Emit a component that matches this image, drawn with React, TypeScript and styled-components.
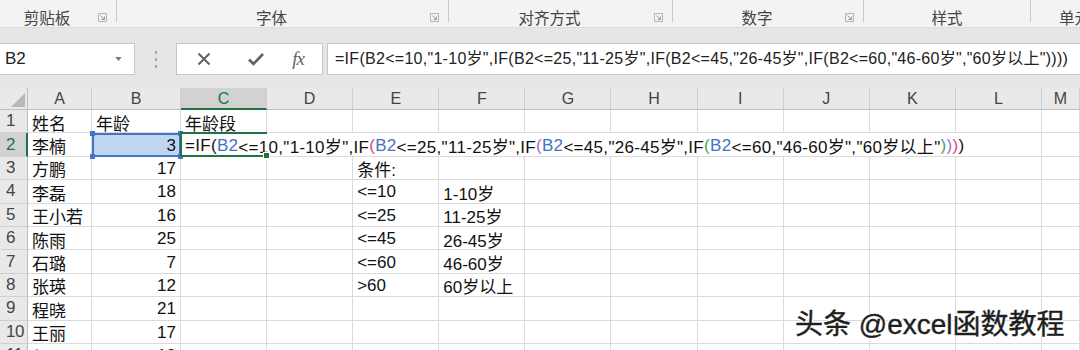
import React from 'react';
import styled, { createGlobalStyle } from 'styled-components';

const GlobalStyle = createGlobalStyle`
  html, body {
    margin: 0;
    padding: 0;
    background: #fff;
  }
  body {
    font-family: "Liberation Sans", "Noto Sans CJK SC", sans-serif;
  }
`;

const GREEN = '#217346';
const REF_BLUE = '#4472c4';

const groups = [
  { label: '剪贴板', width: 117, launcher: true, pad: 0 },
  { label: '字体', width: 332, launcher: true, pad: 0 },
  { label: '对齐方式', width: 224, launcher: true, pad: 0 },
  { label: '数字', width: 191, launcher: true, pad: 0 },
  { label: '样式', width: 167, launcher: false, pad: 0 },
  { label: '单元格', width: 100, launcher: false, pad: 28 },
];

const columns = ['A', 'B', 'C', 'D', 'E', 'F', 'G', 'H', 'I', 'J', 'K', 'L', 'M'];

type Seg = { t: string; c?: string };

const PINK = '#e2457c';
const PURPLE = '#a06ad6';
const LIME = '#41a85f';

const formula: Seg[] = [
  { t: '=IF(' },
  { t: 'B2', c: REF_BLUE },
  { t: '<=10,"1-10岁",IF' },
  { t: '(', c: PINK },
  { t: 'B2', c: REF_BLUE },
  { t: '<=25,"11-25岁",IF' },
  { t: '(', c: PURPLE },
  { t: 'B2', c: REF_BLUE },
  { t: '<=45,"26-45岁",IF' },
  { t: '(', c: LIME },
  { t: 'B2', c: REF_BLUE },
  { t: '<=60,"46-60岁","60岁以上"' },
  { t: ')', c: LIME },
  { t: ')', c: PURPLE },
  { t: ')', c: PINK },
  { t: ')' },
];

const formulaPlain = formula.map((s) => s.t).join('');

// name, age, col E, col F
const rows: [string, string, string, string][] = [
  ['姓名', '年龄', '', ''],
  ['李楠', '3', '', ''],
  ['方鹏', '17', '条件:', ''],
  ['李磊', '18', '<=10', '1-10岁'],
  ['王小若', '16', '<=25', '11-25岁'],
  ['陈雨', '25', '<=45', '26-45岁'],
  ['石璐', '7', '<=60', '46-60岁'],
  ['张瑛', '12', '>60', '60岁以上'],
  ['程晓', '21', '', ''],
  ['王丽', '17', '', ''],
  ['赵丽丽', '19', '', ''],
];

const App = () => (
  <>
    <GlobalStyle />
    <Window>
      <Ribbon>
        {groups.map((g) => (
          <Group key={g.label} $w={g.width}>
            <GroupLabel $pad={g.pad}>{g.label}</GroupLabel>
            {g.launcher && (
              <Launcher viewBox="0 0 9 9">
                <path d="M0.5 0.5 H8.5 V8.5 H0.5 Z" fill="none" stroke="#b3b3b3" />
                <path d="M2.5 2.5 L6.5 6.5 M6.5 3.5 V6.5 H3.5" fill="none" stroke="#9a9a9a" />
              </Launcher>
            )}
          </Group>
        ))}
      </Ribbon>

      <FormulaArea>
        <NameBox>
          <span>B2</span>
          <DropArrow viewBox="0 0 8 5">
            <path d="M0 0 H8 L4 5 Z" fill="#7a7a7a" />
          </DropArrow>
        </NameBox>
        <Grip>
          <i />
          <i />
          <i />
        </Grip>
        <ButtonBox>
          <IconButton>
            <svg width="16" height="16" viewBox="0 0 16 16">
              <path d="M2.5 2.5 L13.5 13.5 M13.5 2.5 L2.5 13.5" stroke="#606060" strokeWidth="2" />
            </svg>
          </IconButton>
          <IconButton>
            <svg width="18" height="16" viewBox="0 0 18 16">
              <path d="M2 8.5 L6.5 13 L16 3" fill="none" stroke="#606060" strokeWidth="2.6" />
            </svg>
          </IconButton>
          <IconButton>
            <Fx>fx</Fx>
          </IconButton>
        </ButtonBox>
        <FormulaInput>{formulaPlain}</FormulaInput>
      </FormulaArea>

      <Sheet>
        <Corner>
          <svg width="14" height="14" viewBox="0 0 14 14">
            <path d="M14 0 V14 H0 Z" fill="#b8b8b8" />
          </svg>
        </Corner>
        {columns.map((c) => (
          <ColHeader key={c} $sel={c === 'C'}>
            {c}
          </ColHeader>
        ))}

        {rows.map((r, i) => {
          const n = i + 1;
          return (
            <React.Fragment key={n}>
              <RowHeader $sel={n === 2}>{n}</RowHeader>
              <Cell>{r[0]}</Cell>
              {n === 2 ? (
                <RefCell $num>
                  {r[1]}
                  <Handle $pos="tl" />
                  <Handle $pos="tr" />
                  <Handle $pos="bl" />
                  <Handle $pos="br" />
                </RefCell>
              ) : (
                <Cell $num={n !== 1}>{r[1]}</Cell>
              )}
              {n === 2 ? (
                <EditCell>
                  <EditText>
                    {formula.map((s, k) => (
                      <Seg key={k} $c={s.c}>
                        {s.t}
                      </Seg>
                    ))}
                  </EditText>
                </EditCell>
              ) : (
                <Cell>{n === 1 ? '年龄段' : ''}</Cell>
              )}
              <Cell />
              <Cell>{r[2]}</Cell>
              <Cell>{r[3]}</Cell>
              <Cell />
              <Cell />
              <Cell />
              <Cell />
              <Cell />
              <Cell />
              <Cell />
            </React.Fragment>
          );
        })}
      </Sheet>

      <Watermark>头条 @excel函数教程</Watermark>
    </Window>
  </>
);

const Window = styled.div`
  position: relative;
  width: 1080px;
  height: 350px;
  overflow: hidden;
  background: #e6e6e6;
`;

const Ribbon = styled.div`
  display: flex;
  height: 28px;
  background: #f3f3f3;
  border-bottom: 1px solid #dcdcdc;
  box-sizing: border-box;
  overflow: hidden;
`;

const Group = styled.div<{ $w: number }>`
  flex: 0 0 ${(p) => p.$w}px;
  height: 22px;
  display: flex;
  align-items: flex-end;
  box-sizing: border-box;
  border-right: 1px solid #c8c8c8;
`;

const GroupLabel = styled.div<{ $pad: number }>`
  flex: 1;
  text-align: ${(p) => (p.$pad ? 'left' : 'center')};
  padding-left: ${(p) => p.$pad}px;
  font-family: "Noto Sans CJK SC", sans-serif;
  font-size: 15.5px;
  line-height: 20px;
  color: #444;
  margin-bottom: -5px;
  white-space: nowrap;
`;

const Launcher = styled.svg`
  width: 9px;
  height: 9px;
  margin: 0 9px 0 4px;
  align-self: flex-end;
`;

const FormulaArea = styled.div`
  display: flex;
  align-items: flex-start;
  height: 60px;
  padding-top: 15px;
  box-sizing: border-box;
`;

const NameBox = styled.div`
  flex: 0 0 135px;
  height: 32px;
  box-sizing: border-box;
  background: #fff;
  border: 1px solid #c6c6c6;
  border-left: none;
  display: flex;
  align-items: center;
  justify-content: space-between;
  padding: 0 12px 0 5px;
  font-size: 17px;
  color: #222;
`;

const DropArrow = styled.svg`
  width: 7px;
  height: 4px;
`;

const Grip = styled.div`
  flex: 0 0 41px;
  height: 32px;
  display: flex;
  flex-direction: column;
  align-items: center;
  justify-content: center;
  gap: 4px;

  i {
    display: block;
    width: 2px;
    height: 3px;
    background: #a8a8a8;
  }
`;

const ButtonBox = styled.div`
  flex: 0 0 147px;
  height: 32px;
  box-sizing: border-box;
  background: #fff;
  border: 1px solid #c6c6c6;
  display: flex;
  align-items: center;
  padding-left: 17px;
  gap: 32px;
`;

const IconButton = styled.div`
  width: 20px;
  height: 20px;
  display: flex;
  align-items: center;
  justify-content: center;

  &:last-child {
    margin-left: -10px;
  }
`;

const Fx = styled.span`
  font-family: "Liberation Serif", serif;
  font-style: italic;
  font-size: 19px;
  color: #666;
  letter-spacing: -1px;
`;

const FormulaInput = styled.div`
  flex: 1;
  margin-left: 4px;
  height: 32px;
  box-sizing: border-box;
  background: #fff;
  border: 1px solid #c6c6c6;
  border-right: none;
  padding-left: 7px;
  font-size: 16px;
  letter-spacing: 0.28px;
  line-height: 30px;
  color: #222;
  white-space: nowrap;
  overflow: hidden;
`;

const Sheet = styled.div`
  display: grid;
  grid-template-columns: 28px 64px 89px repeat(10, 86.1px) 1fr;
  grid-template-rows: 22px;
  grid-auto-rows: 23.4px;
  background: #fff;
`;

const HeaderBase = styled.div`
  background: #e9e9e9;
  box-sizing: border-box;
  display: flex;
  align-items: center;
  justify-content: center;
  font-size: 16px;
  color: #444;
`;

const Corner = styled(HeaderBase)`
  border-right: 1px solid #bdbdbd;
  border-bottom: 1px solid #bdbdbd;
  justify-content: flex-end;
  align-items: flex-end;
  padding: 0 2px 2px 0;
`;

const ColHeader = styled(HeaderBase)<{ $sel?: boolean }>`
  border-right: 1px solid #cfcfcf;
  border-bottom: ${(p) => (p.$sel ? `2px solid ${GREEN}` : '1px solid #bdbdbd')};
  background: ${(p) => (p.$sel ? '#d2d2d2' : '#e9e9e9')};
  color: ${(p) => (p.$sel ? GREEN : '#444')};
  padding-top: 1px;
`;

const RowHeader = styled(HeaderBase)<{ $sel?: boolean }>`
  border-bottom: 1px solid #cfcfcf;
  border-right: ${(p) => (p.$sel ? `2px solid ${GREEN}` : '1px solid #bdbdbd')};
  background: ${(p) => (p.$sel ? '#d2d2d2' : '#e9e9e9')};
  color: ${(p) => (p.$sel ? GREEN : '#444')};
  font-size: 17px;
  justify-content: flex-start;
  padding-left: 6px;
  letter-spacing: -0.5px;
`;

const Cell = styled.div<{ $num?: boolean }>`
  box-sizing: border-box;
  border-right: 1px solid #dadada;
  border-bottom: 1px solid #dadada;
  display: flex;
  align-items: center;
  justify-content: ${(p) => (p.$num ? 'flex-end' : 'flex-start')};
  padding: 2px 4px 0;
  font-size: 17px;
  color: #111;
  white-space: nowrap;
`;

const RefCell = styled(Cell)`
  position: relative;
  background: #c0d5ef;
  border: 2px solid ${REF_BLUE};
  padding-right: 3px;
`;

const Handle = styled.span<{ $pos: 'tl' | 'tr' | 'bl' | 'br' }>`
  position: absolute;
  width: 5px;
  height: 5px;
  background: ${REF_BLUE};
  top: ${(p) => (p.$pos[0] === 't' ? '-4px' : 'auto')};
  bottom: ${(p) => (p.$pos[0] === 'b' ? '-4px' : 'auto')};
  left: ${(p) => (p.$pos[1] === 'l' ? '-4px' : 'auto')};
  right: ${(p) => (p.$pos[1] === 'r' ? '-4px' : 'auto')};
`;

const EditCell = styled.div`
  position: relative;
  z-index: 2;
  box-sizing: border-box;
  border-bottom: 1px solid #dadada;
  display: flex;

  &::after {
    content: '';
    position: absolute;
    left: -1px;
    top: -1px;
    width: 87px;
    bottom: -1px;
    box-sizing: border-box;
    border: 2px solid ${GREEN};
    border-right: none;
    pointer-events: none;
  }

  &::before {
    content: '';
    position: absolute;
    left: 82px;
    bottom: -3px;
    width: 5px;
    height: 5px;
    background: ${GREEN};
    border: 1px solid #fff;
    z-index: 3;
  }
`;

const EditText = styled.div`
  display: flex;
  align-items: center;
  background: #fff;
  padding: 2px 6px 0 4px;
  font-size: 17px;
  letter-spacing: 0.3px;
  color: #111;
  white-space: nowrap;
`;

const Seg = styled.span<{ $c?: string }>`
  color: ${(p) => p.$c || '#111'};
`;

const Watermark = styled.div`
  position: absolute;
  left: 795px;
  top: 308px;
  font-family: "Liberation Sans", "Noto Sans CJK SC", sans-serif;
  font-size: 28px;
  line-height: 34px;
  color: #1e1e1e;
  -webkit-text-stroke: 0.4px #1e1e1e;
  white-space: nowrap;
  text-shadow: 1px 1px 0 #fff, -1px -1px 0 #fff, 1px -1px 0 #fff, -1px 1px 0 #fff;
`;

export default App;
